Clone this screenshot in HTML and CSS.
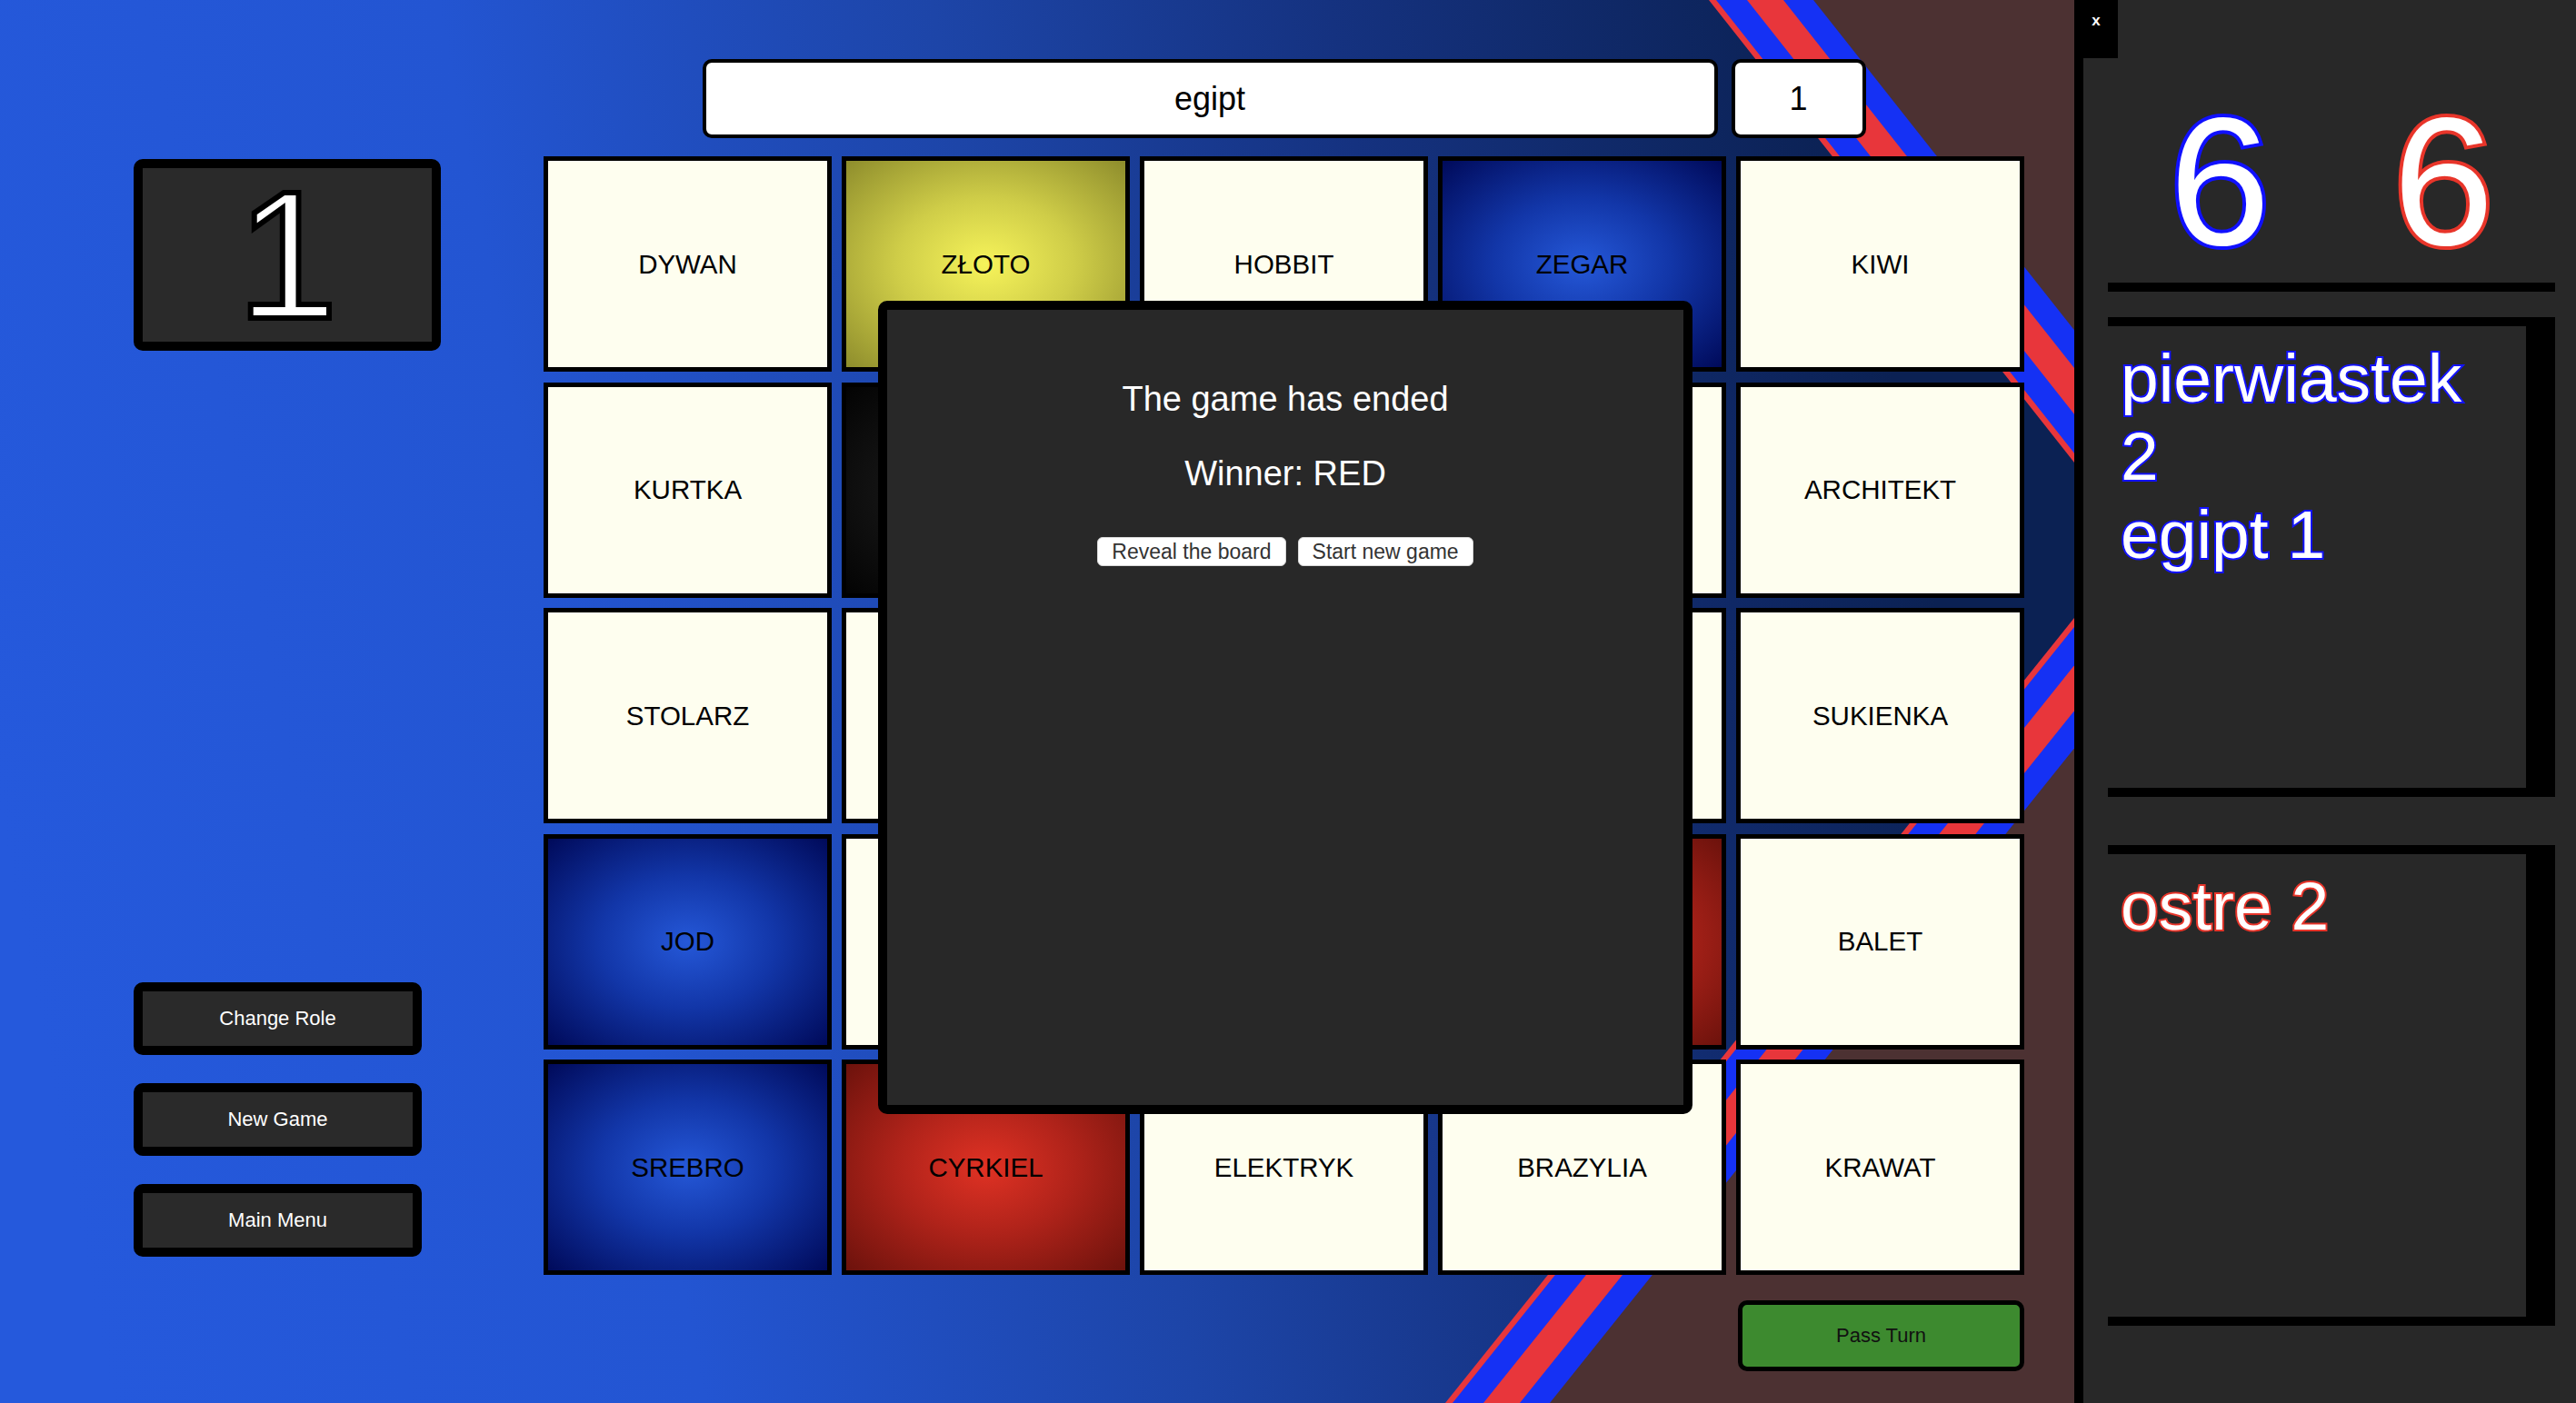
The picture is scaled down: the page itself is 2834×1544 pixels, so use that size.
FILE: index.html
```html
<!DOCTYPE html>
<html lang="pl">
<head>
<meta charset="utf-8">
<title>Tajniacy</title>
<link rel="stylesheet" href="styles.css">
</head>
<body>
<main class="main">
  <svg class="bg" viewBox="0 0 2282 1544" preserveAspectRatio="none" aria-hidden="true">
    <defs>
      <linearGradient id="bluebg" gradientUnits="userSpaceOnUse" x1="0" y1="900" x2="2100" y2="500">
        <stop offset="0" stop-color="#2559dc"/>
        <stop offset="0.3" stop-color="#2355d2"/>
        <stop offset="0.55" stop-color="#1d45a8"/>
        <stop offset="0.75" stop-color="#153280"/>
        <stop offset="1" stop-color="#0b2153"/>
      </linearGradient>
      <polygon id="chev" points="0,0 1880,0 2350,595 1590,1544 0,1544"/>
    </defs>
    <rect width="2282" height="1544" fill="#4c3132"/>
    <use href="#chev" x="115" fill="#1531f4"/>
    <use href="#chev" x="82" fill="#e8363b"/>
    <use href="#chev" x="42" fill="#1531f4"/>
    <use href="#chev" x="8" fill="#e8363b"/>
    <use href="#chev" fill="url(#bluebg)"/>
  </svg>

  <section class="side">
    <div class="role">1</div>
    <nav class="menu">
      <button class="menu-btn">Change Role</button>
      <button class="menu-btn">New Game</button>
      <button class="menu-btn">Main Menu</button>
    </nav>
  </section>

  <section class="board">
    <div class="clue-row">
      <div class="field word">egipt</div>
      <div class="field count">1</div>
    </div>

    <div class="grid-wrap">
      <div class="grid">
        <div class="card">DYWAN</div>
        <div class="card yellow">ZŁOTO</div>
        <div class="card">HOBBIT</div>
        <div class="card blue">ZEGAR</div>
        <div class="card">KIWI</div>

        <div class="card">KURTKA</div>
        <div class="card black"></div>
        <div class="card"></div>
        <div class="card"></div>
        <div class="card">ARCHITEKT</div>

        <div class="card">STOLARZ</div>
        <div class="card"></div>
        <div class="card"></div>
        <div class="card"></div>
        <div class="card">SUKIENKA</div>

        <div class="card blue">JOD</div>
        <div class="card"></div>
        <div class="card"></div>
        <div class="card red"></div>
        <div class="card">BALET</div>

        <div class="card blue">SREBRO</div>
        <div class="card red">CYRKIEL</div>
        <div class="card">ELEKTRYK</div>
        <div class="card">BRAZYLIA</div>
        <div class="card">KRAWAT</div>
      </div>

      <div class="modal">
        <p class="modal-title">The game has ended</p>
        <p class="modal-winner">Winner: RED</p>
        <div class="modal-actions">
          <button class="modal-btn">Reveal the board</button>
          <button class="modal-btn">Start new game</button>
        </div>
      </div>
    </div>

    <div class="pass-row">
      <button class="pass">Pass Turn</button>
    </div>
  </section>
</main>

<aside class="panel">
  <button class="close">x</button>
  <div class="scores">
    <span class="score score-blue">6</span>
    <span class="score score-red">6</span>
  </div>
  <div class="clues clues-blue">
    <div class="clue">pierwiastek 2</div>
    <div class="clue">egipt 1</div>
  </div>
  <div class="clues clues-red">
    <div class="clue">ostre 2</div>
  </div>
</aside>
</body>
</html>
```

FILE: styles.css
```css
* {
  box-sizing: border-box;
}

html,
body {
  margin: 0;
  padding: 0;
}

body {
  display: flex;
  width: 2834px;
  height: 1544px;
  overflow: hidden;
  font-family: "Liberation Sans", Arial, sans-serif;
  background: #4c3132;
}

button {
  font-family: "Liberation Sans", Arial, sans-serif;
  cursor: pointer;
}

/* ---------- main game area ---------- */
.main {
  position: relative;
  width: 2282px;
  height: 1544px;
  flex: 0 0 2282px;
  display: flex;
  align-items: flex-start;
  padding: 65px 0 0 147px;
}

.bg {
  position: absolute;
  left: 0;
  top: 0;
  width: 100%;
  height: 100%;
  z-index: 0;
}

.side,
.board {
  position: relative;
  z-index: 1;
}

/* ---------- left column ---------- */
.side {
  width: 338px;
  margin-right: 113px;
  display: flex;
  flex-direction: column;
  align-items: flex-start;
}

.role {
  margin-top: 110px;
  width: 338px;
  height: 211px;
  border: 10px solid #000;
  border-radius: 10px;
  background: #2a2a2a;
  color: #fff;
  font-size: 200px;
  line-height: 191px;
  text-align: center;
  -webkit-text-stroke: 6px #000;
}

.menu {
  margin-top: 695px;
  display: flex;
  flex-direction: column;
  gap: 31px;
}

.menu-btn {
  width: 317px;
  height: 80px;
  border: 10px solid #000;
  border-radius: 10px;
  background: #2a2a2a;
  color: #fff;
  font-size: 22px;
  padding: 0;
}

/* ---------- board ---------- */
.board {
  width: 1629px;
  display: flex;
  flex-direction: column;
}

.clue-row {
  display: flex;
  justify-content: center;
  gap: 15px;
  height: 87px;
}

.field {
  border: 4px solid #000;
  border-radius: 10px;
  background: #fff;
  color: #000;
  font-size: 36px;
  display: flex;
  align-items: center;
  justify-content: center;
}

.word {
  width: 1117px;
}

.count {
  width: 148px;
}

.grid-wrap {
  position: relative;
  margin-top: 20px;
}

.grid {
  display: grid;
  grid-template-columns: repeat(5, 317px);
  grid-template-rows: repeat(5, 237px);
  column-gap: 11px;
  row-gap: 11.5px;
}

.card {
  border: 5px solid #000;
  background: #fefeef;
  color: #000;
  font-size: 29.5px;
  display: flex;
  align-items: center;
  justify-content: center;
}

.card.yellow {
  background: radial-gradient(ellipse at center, #f6f35a 0%, #cfcd48 45%, #8e8d2c 100%);
}

.card.blue {
  background: radial-gradient(ellipse at center, #2558d8 0%, #1236a8 45%, #000a5a 100%);
}

.card.red {
  background: radial-gradient(ellipse at center, #e03224 0%, #b0231a 45%, #6c120c 100%);
}

.card.black {
  background: radial-gradient(ellipse at center, #2a2a2a 0%, #141414 50%, #030303 100%);
}

/* ---------- end-of-game modal ---------- */
.modal {
  position: absolute;
  left: 368px;
  top: 159px;
  width: 896px;
  height: 895px;
  border: 10px solid #000;
  border-radius: 10px;
  background: #282828;
  color: #fff;
  text-align: center;
  padding-top: 77px;
}

.modal-title,
.modal-winner {
  margin: 0;
  font-size: 38px;
  line-height: normal;
}

.modal-title {
  margin-bottom: 39px;
}

.modal-winner {
  margin-bottom: 48px;
}

.modal-actions {
  display: flex;
  justify-content: center;
  gap: 13px;
}

.modal-btn {
  height: 32px;
  padding: 0 15px;
  border: 1px solid #d8d8d8;
  border-radius: 6px;
  background: #fff;
  color: #333;
  font-size: 23px;
  line-height: 30px;
}

/* ---------- pass turn ---------- */
.pass-row {
  display: flex;
  justify-content: flex-end;
  margin-top: 28px;
}

.pass {
  width: 315px;
  height: 78px;
  border: 5px solid #000;
  border-radius: 10px;
  background: #3d8a2f;
  color: #111;
  font-size: 22px;
  padding: 0;
}

/* ---------- right panel ---------- */
.panel {
  position: relative;
  flex: 0 0 552px;
  width: 552px;
  height: 1544px;
  border-left: 10px solid #000;
  background: #282828;
  padding: 0 23px 0 27px;
}

.close {
  position: absolute;
  left: -10px;
  top: 0;
  width: 48px;
  height: 64px;
  border: none;
  background: #000;
  color: #fff;
  font-size: 17px;
  font-weight: bold;
  line-height: 1;
  padding: 14px 0 0;
  display: flex;
  justify-content: center;
  align-items: flex-start;
}

.scores {
  display: flex;
  justify-content: space-around;
  padding: 100px 0 11px;
  border-bottom: 10px solid #000;
}

.score {
  font-size: 200px;
  line-height: 200px;
  color: #fff;
  paint-order: stroke fill;
}

.score-blue {
  -webkit-text-stroke: 8px #1010ff;
}

.score-red {
  -webkit-text-stroke: 8px #e8352a;
}

.clues {
  height: 528px;
  border-top: 10px solid #000;
  border-bottom: 10px solid #000;
  border-right: 32px solid #000;
  padding: 14px 24px 14px 14px;
}

.clues-blue {
  margin-top: 28px;
}

.clues-red {
  margin-top: 53px;
  height: 529px;
}

.clue {
  font-size: 75px;
  line-height: normal;
  color: #fff;
  paint-order: stroke fill;
}

.clues-blue .clue {
  -webkit-text-stroke: 4px #1212ff;
}

.clues-red .clue {
  -webkit-text-stroke: 4px #e8352a;
}
```
